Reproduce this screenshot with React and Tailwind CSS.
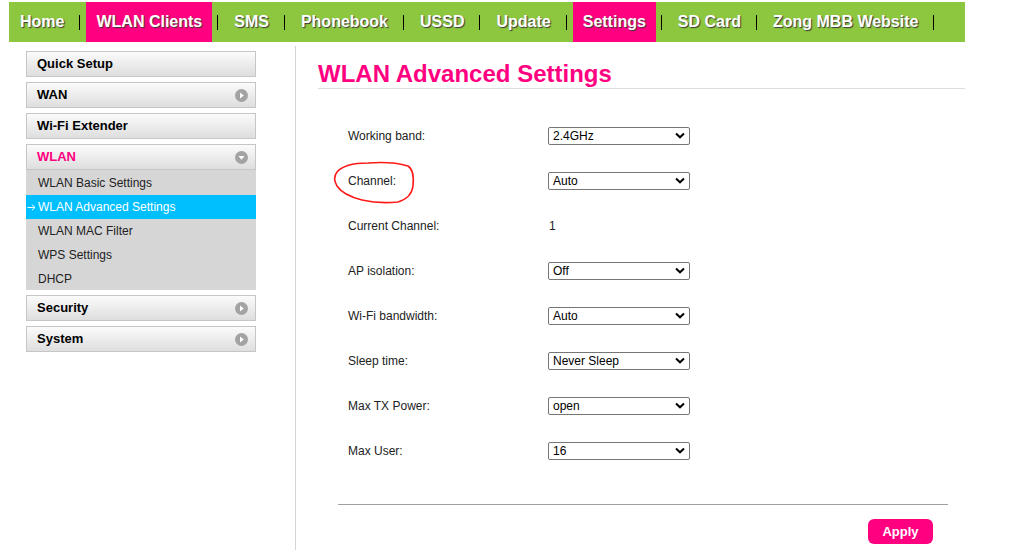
import React from "react";

const navItems = [
  { label: "Home" },
  { label: "WLAN Clients", active: true },
  { label: "SMS" },
  { label: "Phonebook" },
  { label: "USSD" },
  { label: "Update" },
  { label: "Settings", active: true },
  { label: "SD Card" },
  { label: "Zong MBB Website" },
];

const subItems = [
  "WLAN Basic Settings",
  "WLAN Advanced Settings",
  "WLAN MAC Filter",
  "WPS Settings",
  "DHCP",
];

const rows = [
  { label: "Working band:", value: "2.4GHz" },
  { label: "Channel:", value: "Auto" },
  { label: "Current Channel:", text: "1" },
  { label: "AP isolation:", value: "Off" },
  { label: "Wi-Fi bandwidth:", value: "Auto" },
  { label: "Sleep time:", value: "Never Sleep" },
  { label: "Max TX Power:", value: "open" },
  { label: "Max User:", value: "16" },
];

function CircleIcon({ down }) {
  return (
    <svg width="13" height="13" viewBox="0 0 13 13">
      <circle cx="6.5" cy="6.5" r="6.5" fill="#a3a3a3" />
      {down ? (
        <path d="M3.5 5 L9.5 5 L6.5 8.8 Z" fill="#fff" />
      ) : (
        <path d="M5 3.5 L5 9.5 L8.8 6.5 Z" fill="#fff" />
      )}
    </svg>
  );
}

function MenuBox({ label, icon, pink, className = "" }) {
  return (
    <div
      className={`h-[26px] flex items-center justify-between pl-[10px] pr-[7px] border border-[#c6c6c6] bg-gradient-to-b from-[#fbfbfb] to-[#dedede] text-[13px] font-bold ${
        pink ? "text-[#ff0080]" : "text-black"
      } ${className}`}
    >
      <span>{label}</span>
      {icon && <CircleIcon down={icon === "down"} />}
    </div>
  );
}

function FakeSelect({ value }) {
  return (
    <div className="w-[142px] h-[18px] border border-[#767676] rounded-[2px] flex items-center justify-between pl-[4px] pr-[4px] text-[12px] text-black bg-white">
      <span>{value}</span>
      <svg width="10" height="7" viewBox="0 0 10 7">
        <path d="M1 1.5 L5 5.3 L9 1.5" fill="none" stroke="#000" strokeWidth="2" />
      </svg>
    </div>
  );
}

export default function App() {
  return (
    <div className="relative w-[1018px] h-[550px] overflow-hidden bg-white font-['Liberation_Sans',Arial,sans-serif]">
      <div className="pt-[2px] pl-[9px]">
        <nav className="flex items-stretch h-[40px] w-[956px] bg-[#8dc63f] pl-[1px]">
          {navItems.map((item) => (
            <React.Fragment key={item.label}>
              <div
                className={`flex items-center px-[10px] text-[16px] font-bold text-white [text-shadow:1px_1px_1px_#3a3a3a] ${
                  item.active ? "bg-[#ff0080]" : ""
                }`}
              >
                {item.label}
              </div>
              <div className="self-center w-px h-[15px] bg-black ml-[5px] mr-[6px]" />
            </React.Fragment>
          ))}
        </nav>
      </div>

      <div className="flex">
        <aside className="ml-[26px] mt-[9px] w-[230px] flex flex-col">
          <MenuBox label="Quick Setup" />
          <MenuBox label="WAN" icon="right" className="mt-[5px]" />
          <MenuBox label="Wi-Fi Extender" className="mt-[5px]" />
          <MenuBox label="WLAN" icon="down" pink className="mt-[5px]" />
          <div className="bg-[#d6d6d6] pt-px">
            {subItems.map((s, i) =>
              i === 1 ? (
                <div
                  key={s}
                  className="h-[24px] flex items-center bg-[#00bfff] text-white text-[12px]"
                >
                  <svg width="12" height="8" viewBox="0 0 12 8" className="shrink-0">
                    <path d="M1.5 4.5 H9 M6 1.8 L9 4.5 L6 7.2" fill="none" stroke="#fff" strokeWidth="1" />
                  </svg>
                  {s}
                </div>
              ) : (
                <div
                  key={s}
                  className={`${i === 4 ? "h-[23px]" : "h-[24px]"} flex items-center text-[#222] text-[12px] pl-[12px]`}
                >
                  {s}
                </div>
              )
            )}
          </div>
          <MenuBox label="Security" icon="right" className="mt-[5px]" />
          <MenuBox label="System" icon="right" className="mt-[5px]" />
        </aside>

        <div className="ml-[39px] mt-[4px] w-px h-[504px] bg-[#d4d4d4]" />

        <main className="ml-[22px] w-[647px]">
          <h1 className="mt-[18px] h-[29px] leading-[28px] text-[24px] font-bold text-[#ff0080] border-b border-[#dddddd]">
            WLAN Advanced Settings
          </h1>
          <div className="mt-[24px] pl-[30px]">
            {rows.map((r) => (
              <div key={r.label} className="h-[45px] flex items-center">
                <div className="w-[200px] text-[12px] text-[#222]">{r.label}</div>
                {r.value ? (
                  <FakeSelect value={r.value} />
                ) : (
                  <div className="pl-[1px] text-[12px] text-[#222]">{r.text}</div>
                )}
              </div>
            ))}
          </div>
          <div className="ml-[20px] mt-[31px] w-[610px] h-px bg-[#a0a0a0]" />
          <div className="mt-[14px] ml-[550px] w-[65px] h-[25px] rounded-[6px] bg-[#ff0080] flex items-center justify-center text-white text-[13px] font-bold">
            Apply
          </div>
        </main>
      </div>

      <svg
        className="absolute left-[320px] top-[150px]"
        width="120"
        height="60"
        viewBox="0 0 120 60"
      >
        <path
          d="M17 22 C 22 16, 32 13, 48 13 C 62 12, 78 13, 88 16 C 93 19, 94 26, 93 36 C 92 44, 88 49, 78 52 C 68 53, 55 53, 42 50 C 30 47, 21 42, 17 36 C 14 31, 14 26, 17 22"
          fill="none"
          stroke="#ff1a1a"
          strokeWidth="1.6"
        />
      </svg>
    </div>
  );
}
